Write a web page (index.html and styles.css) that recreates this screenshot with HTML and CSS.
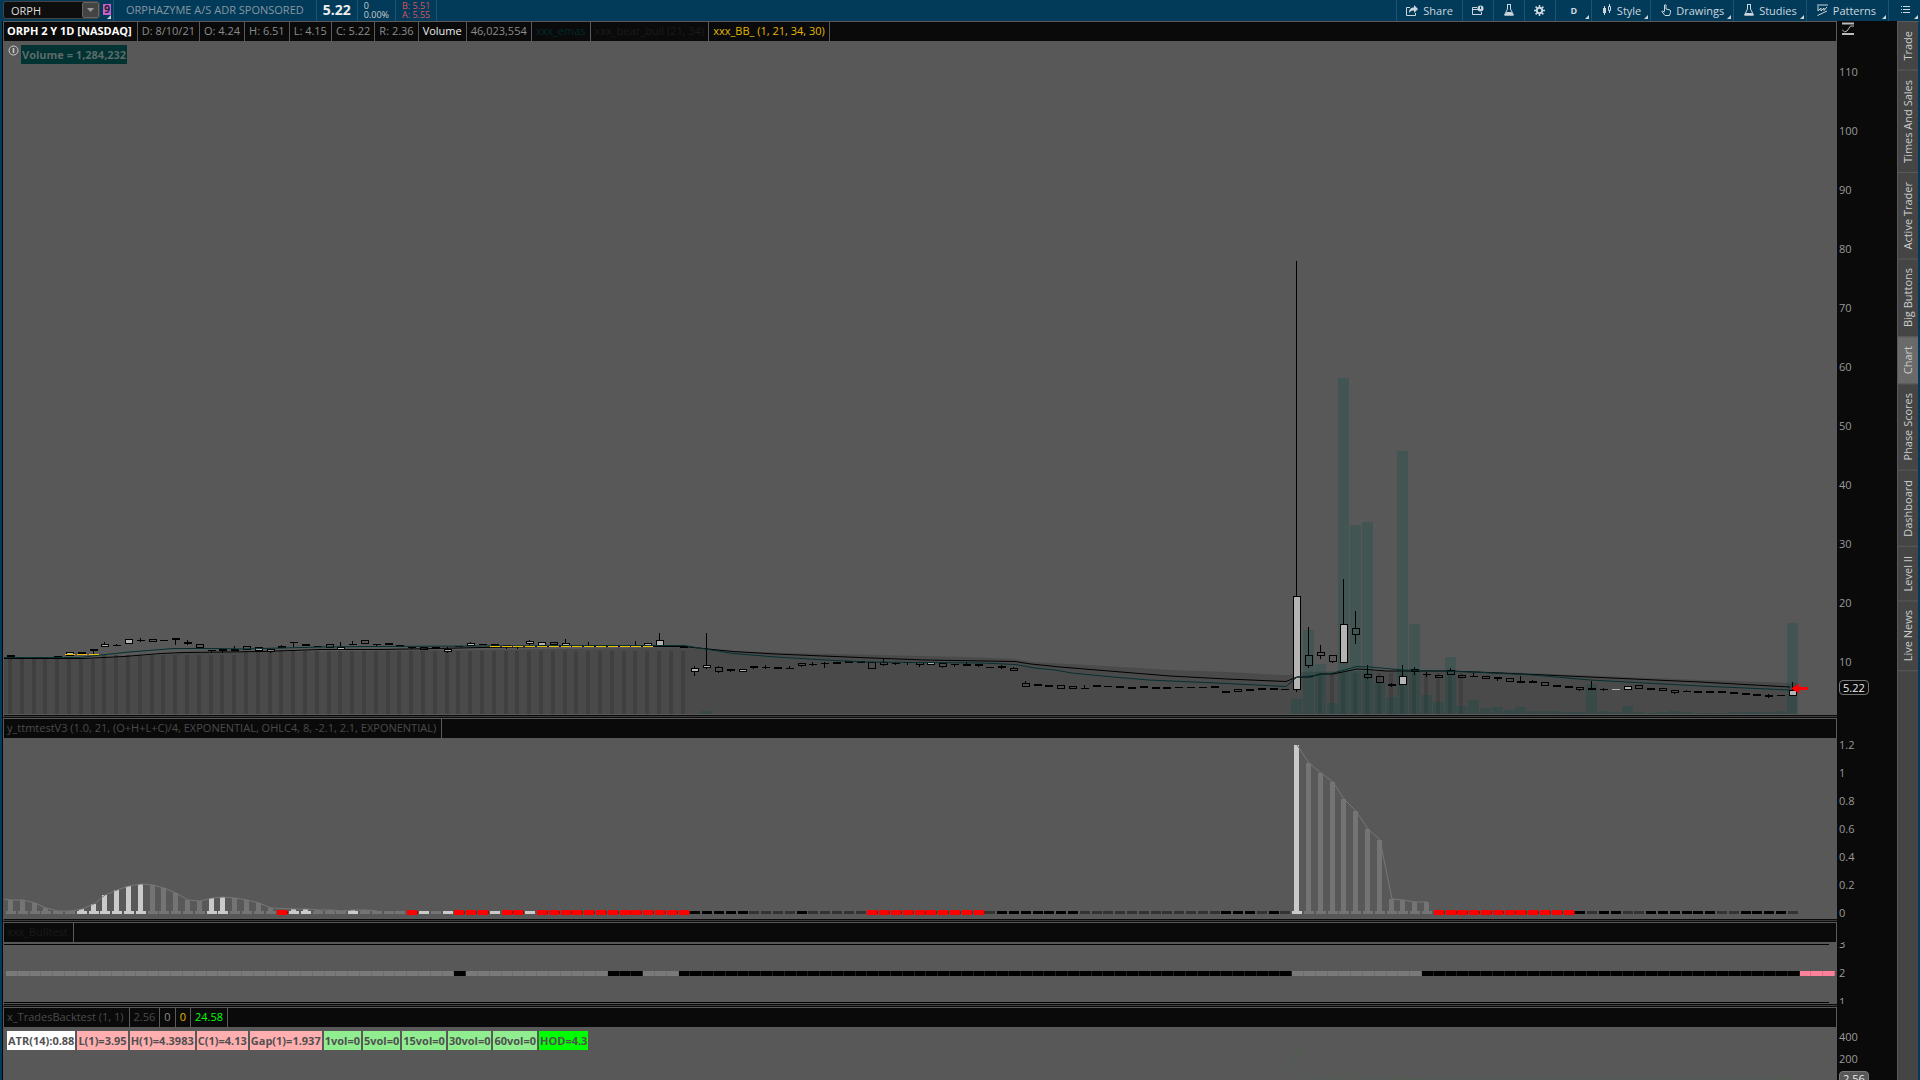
FILE: index.html
```
<!DOCTYPE html>
<html lang="en">
<head>
    <meta charset="UTF-8">
    <meta name="viewport" content="width=device-width, initial-scale=1.0">
    <title>ORPH - Chart</title>
    <link rel="stylesheet" href="styles.css">
</head>
<body>
    <header class="toolbar">
        <div class="symbol-box">
            <input type="text" class="symbol" aria-label="Symbol" value="ORPH">
            <button class="symbol-drop" aria-label="Symbol list"><svg width="8" height="4" viewBox="0 0 8 4"><path d="M0 0h7L3.500 4z" fill="#999"/></svg></button>
        </div>
        <button class="link-color more" aria-label="Link color 9"><span>9</span></button>
        <span class="company">ORPHAZYME A/S ADR SPONSORED</span>
        <span class="last">5.22</span>
        <span class="pair">0<br>0.00%</span>
        <span class="pair quote">B: 5.51<br>A: 5.55</span>
        <nav class="tools">
            <button class="tool share"><svg width="12" height="11" viewBox="0 0 12 11"><path d="M4 2.500H.5v8h9V8" fill="none" stroke="#ccd6dd"/><path d="M3 8c0-4 2-5.500 5-5.500V0l4 4-4 4V5.500C6 5.500 4.500 6 3 8z" fill="#ccd6dd"/></svg>Share</button>
            <button class="tool" aria-label="Detach"><svg width="12" height="11" viewBox="0 0 12 11"><path d="M5 2.500H.5v7h9V7M.5 4.500H6" fill="none" stroke="#ccd6dd"/><circle cx="8.500" cy="3.500" r="3" fill="#ccd6dd"/><path d="M8.500 1.500v2.500" stroke="#023a5a"/></svg></button>
            <button class="tool" aria-label="Lab"><svg width="10" height="12" viewBox="0 0 10 12"><path d="M3 .5h4M3.500 1v4L.5 11h9L6.500 5V1" fill="none" stroke="#ccd6dd"/><path d="M2.500 8h5l2 3.500h-9z" fill="#ccd6dd"/></svg></button>
            <button class="tool" aria-label="Settings"><svg width="11" height="11" viewBox="0 0 11 11"><circle cx="5.500" cy="5.500" r="2.700" fill="none" stroke="#ccd6dd" stroke-width="2"/><path d="M5.500 0v2M5.500 9v2M0 5.500h2M9 5.500h2M1.600 1.600l1.400 1.400M8 8l1.400 1.400M9.400 1.600L8 3M3 8L1.600 9.400" stroke="#ccd6dd" stroke-width="1.500"/></svg></button>
            <button class="tool period more">D</button>
            <button class="tool more"><svg width="10" height="12" viewBox="0 0 10 12"><path d="M2.500 2v9M7.500 0v9" stroke="#ccd6dd"/><path d="M1 4h3v5H1z" fill="#ccd6dd"/><path d="M6.500 2.500h2v4h-2z" fill="#023a5a" stroke="#ccd6dd"/></svg>Style</button>
            <button class="tool more"><svg width="10" height="12" viewBox="0 0 10 12"><path d="M3.500 7.500V1q.8-1 1.500 0v4l4 1q.8.500.5 2.500l-1 3H4L.8 7.500q.8-1 2.700.5" fill="none" stroke="#ccd6dd"/></svg>Drawings</button>
            <button class="tool more"><svg width="10" height="12" viewBox="0 0 10 12"><path d="M3 .5h4M3.500 1v4L.5 11h9L6.500 5V1" fill="none" stroke="#ccd6dd"/><path d="M1.500 9h7l1 2.500h-9z" fill="#ccd6dd"/></svg>Studies</button>
            <button class="tool patterns more"><svg width="11" height="12" viewBox="0 0 11 12"><path d="M0 1h11M1 2v5l3-3v3l3-3v2.500L10 3M.5 11.500L10 7" fill="none" stroke="#ccd6dd"/></svg>Patterns</button>
            <button class="tool more menu" aria-label="Menu"><svg width="9" height="8" viewBox="0 0 9 8"><path d="M0 .5h1M0 3.500h1M0 6.500h1M2 .5h7M2 3.500h7M2 6.500h7" stroke="#ccd6dd"/></svg></button>
        </nav>
    </header>

    <div class="workspace">
        <main class="charts">
            <section class="panel price">
                <div class="plot-side">
                    <div class="legend">
                        <span class="name">ORPH 2 Y 1D [NASDAQ]</span>
                        <span>D: 8/10/21</span>
                        <span>O: 4.24</span>
                        <span>H: 6.51</span>
                        <span>L: 4.15</span>
                        <span>C: 5.22</span>
                        <span>R: 2.36</span>
                        <span class="white">Volume</span>
                        <span>46,023,554</span>
                        <span class="emas">xxx_emas</span>
                        <span class="faint">xxx_bear_bull (21, 34)</span>
                        <span class="gold">xxx_BB_ (1, 21, 34, 30)</span>
                    </div>
                    <div class="plot">
                        <svg id="priceChart" viewBox="4 41 1833 674" preserveAspectRatio="none"></svg>
                        <div class="labels">
                            <svg class="info" width="11" height="12" viewBox="0 0 11 12"><circle cx="5.500" cy="5.500" r="4.500" fill="none" stroke="#ccc"/><path d="M5.500 3v5" stroke="#ccc" stroke-width="1.500"/></svg>
                            <span class="volume-label">Volume = 1,284,232</span>
                        </div>
                    </div>
                </div>
                <div class="axis">
                    <svg class="fit" width="12" height="14" viewBox="0 0 12 14"><path d="M0 1.500h12M0 12h12" stroke="#bbb" stroke-width="2"/><path d="M0 7.500l2.500 2.500 2.500-1 3.500-5H12" fill="none" stroke="#bbb"/></svg>
                    <span>110</span><span>100</span><span>90</span><span>80</span><span>70</span><span>60</span><span>50</span><span>40</span><span>30</span><span>20</span><span>10</span>
                    <b class="tag">5.22</b>
                </div>
            </section>

            <section class="panel squeeze">
                <div class="plot-side">
                    <div class="legend">
                        <span class="dim">y_ttmtestV3 (1.0, 21, (O+H+L+C)/4, EXPONENTIAL, OHLC4, 8, -2.1, 2.1, EXPONENTIAL)</span>
                    </div>
                    <div class="plot"><svg id="squeezeChart" viewBox="4 738 1833 181" preserveAspectRatio="none"></svg></div>
                </div>
                <div class="axis">
                    <span>1.2</span><span>1</span><span>0.8</span><span>0.6</span><span>0.4</span><span>0.2</span><span>0</span>
                </div>
            </section>

            <section class="panel trend">
                <div class="plot-side">
                    <div class="legend">
                        <span class="faint">xxx_Bulltest</span>
                    </div>
                    <div class="plot"><svg id="trendChart" viewBox="4 942 1833 62" preserveAspectRatio="none"></svg></div>
                </div>
                <div class="axis">
                    <span>3</span><span>2</span><span>1</span>
                </div>
            </section>

            <section class="panel trades">
                <div class="plot-side">
                    <div class="legend">
                        <span class="dim">x_TradesBacktest (1, 1)</span>
                        <span class="dim">2.56</span>
                        <span>0</span>
                        <span class="gold">0</span>
                        <span class="lime">24.58</span>
                    </div>
                    <div class="plot">
                        <svg id="tradesChart" viewBox="4 1027 1833 53" preserveAspectRatio="none"></svg>
                        <div class="stats">
                            <span>ATR(14):0.88</span>
                            <span class="pink">L(1)=3.95</span>
                            <span class="pink">H(1)=4.3983</span>
                            <span class="pink">C(1)=4.13</span>
                            <span class="pink">Gap(1)=1.937</span>
                            <span class="green">1vol=0</span>
                            <span class="green">5vol=0</span>
                            <span class="green">15vol=0</span>
                            <span class="green">30vol=0</span>
                            <span class="green">60vol=0</span>
                            <span class="hod">HOD=4.3</span>
                        </div>
                    </div>
                </div>
                <div class="axis">
                    <span>400</span><span>200</span>
                    <b class="tag">2.56</b>
                </div>
            </section>
        </main>

        <nav class="side-tabs">
            <button>Trade</button>
            <button>Times And Sales</button>
            <button>Active Trader</button>
            <button>Big Buttons</button>
            <button class="active">Chart</button>
            <button>Phase Scores</button>
            <button>Dashboard</button>
            <button>Level II</button>
            <button>Live News</button>
        </nav>
    </div>

    <script src="script.js"></script>
</body>
</html>
```
FILE: styles.css
```
* {
    box-sizing: border-box;
}

body {
    margin: 0;
    height: 100vh;
    display: flex;
    flex-direction: column;
    overflow: hidden;
    background-color: #023a5a;
    color: #999;
    font-family: "Open Sans", "Noto Sans", sans-serif;
    font-size: 11px;
}

button, input {
    font: inherit;
    color: inherit;
    background: none;
    border: none;
    padding: 0;
    margin: 0;
}

/* Top toolbar */
.toolbar {
    display: flex;
    height: 21px;
    flex: none;
    padding-left: 3px;
    white-space: nowrap;
}

.symbol-box {
    display: flex;
    width: 97px;
    height: 18px;
    margin-top: 1px;
    background-color: #0e0e0e;
    border: 1px solid #444;
    border-radius: 3px;
}

.symbol {
    flex: 1;
    min-width: 0;
    padding-left: 7px;
    color: #ddd;
}

.symbol-drop {
    display: flex;
    align-items: center;
    justify-content: center;
    width: 17px;
    background-color: #444;
    border: 1px solid #666;
    border-radius: 2px;
}

.link-color {
    width: 13px;
    padding-left: 3px;
    display: flex;
}

.link-color span {
    width: 8px;
    height: 11px;
    margin-top: 4px;
    background-color: #c65fd0;
    color: #222;
    font-size: 10px;
    line-height: 11px;
    font-weight: bold;
    text-align: center;
}

.company, .last, .pair {
    border-left: 1px solid #1c5272;
    line-height: 20px;
    padding: 0 6px;
}

.company {
    padding: 0 12px;
    color: #8796a0;
}

.last {
    color: #eee;
    font-size: 14px;
    font-weight: bold;
}

.pair {
    color: #ccc;
    font-size: 9px;
    line-height: 9px;
    padding-top: 1px;
}

.quote {
    color: #d9525c;
    border-right: 1px solid #1c5272;
}

.tools {
    display: flex;
    margin-left: auto;
}

.tool {
    display: flex;
    align-items: center;
    justify-content: center;
    gap: 5px;
    min-width: 31px;
    padding: 0 9px 1px;
    border-left: 1px solid #1c5272;
    color: #ccd6dd;
}

.more {
    position: relative;
}

/* small corner triangle on buttons that open a menu */
.more::after {
    content: "";
    position: absolute;
    right: 2px;
    bottom: 2px;
    border: 2px solid #ccd6dd;
    border-top-color: transparent;
    border-left-color: transparent;
}

.tool.more {
    padding-left: 10px;
}

.tool.period {
    width: 36px;
    font-size: 9px;
    font-weight: bold;
}

.tool.patterns {
    padding-right: 12px;
}

.tool.menu {
    width: 32px;
}

/* Chart area */
.workspace {
    display: flex;
    flex: 1;
    min-height: 0;
}

.charts {
    flex: 1;
    min-width: 0;
    display: flex;
    flex-direction: column;
    padding-left: 1px;
    background-color: #0a0a0a;
    border-left: 2px solid #023a5a;
}

.panel {
    display: flex;
    min-height: 0;
}

.price {
    flex: 697 1 0;
}

.squeeze {
    flex: 204 1 0;
}

.trend {
    flex: 85 1 0;
}

.trades {
    flex: 73 1 0;
}

.plot-side {
    flex: 1;
    min-width: 0;
    display: flex;
    flex-direction: column;
    background-color: #3c3c3c;
    border-left: 1px solid #585858;
    border-bottom: 3px double #0a0a0a;
}

.trades .plot-side {
    border-bottom: none;
}

.legend {
    display: flex;
    height: 20px;
    flex: none;
    background-color: #0a0a0a;
    border-top: 1px solid #5a5a5a;
    border-right: 1px solid #5a5a5a;
    line-height: 18px;
    white-space: nowrap;
    color: #8c8c8c;
}

.legend span {
    padding: 0 4px;
    border-right: 1px solid #5a5a5a;
}

.legend span:first-child {
    padding: 0 5px 0 3px;
}

.legend .name {
    color: #fff;
    font-weight: bold;
}

.legend .white {
    color: #eee;
}

.legend .emas {
    color: #002b2b;
}

.legend .faint {
    color: #1a1a1a;
}

.legend .gold {
    color: #e6b800;
}

.legend .dim {
    color: #4a4a4a;
}

.legend .lime {
    color: #00ff00;
}

.plot {
    position: relative;
    flex: 1;
    min-height: 0;
    background-color: #585858;
}

.plot > svg {
    position: absolute;
    width: 100%;
    height: 100%;
}

.labels {
    position: relative;
    display: flex;
    gap: 2px;
    padding: 4px;
}

.volume-label {
    background-color: #003331;
    color: #5c6a6a;
    font-weight: bold;
    line-height: 19px;
    padding: 0 1px;
}

.stats {
    position: relative;
    display: flex;
    gap: 2px;
    padding: 4px 3px;
    white-space: nowrap;
}

.stats span {
    padding: 0 1px;
    background-color: #fff;
    color: #505050;
    font-weight: bold;
    line-height: 19px;
}

.stats .pink {
    background-color: #ffafaf;
}

.stats .green {
    background-color: #90ee90;
}

.stats .hod {
    background-color: #00ff00;
}

/* Value axes */
.axis {
    position: relative;
    flex: none;
    width: 60px;
    display: flex;
    flex-direction: column;
    justify-content: space-between;
    padding-left: 2px;
    line-height: 16px;
}

.price .axis {
    padding-top: 43px;
    padding-bottom: 48px;
}

.squeeze .axis {
    padding-top: 19px;
    padding-bottom: 1px;
}

.trend .axis {
    margin: 20px 0 3px;
    overflow: hidden;
}

.trend .axis span:first-child {
    margin-top: -6px;
}

.trend .axis span:last-child {
    margin-bottom: -6px;
}

.trades .axis {
    justify-content: flex-start;
    gap: 6px;
    padding-top: 22px;
}

.fit {
    position: absolute;
    left: 5px;
    top: 1px;
}

.tag {
    position: absolute;
    left: 2px;
    bottom: 23px;
    padding: 0 3px;
    border: 1px solid #777;
    border-radius: 4px;
    background-color: #0a0a0a;
    color: #eee;
    font-weight: normal;
    line-height: 13px;
}

.trades .tag {
    bottom: -6px;
    background-color: #585858;
}

/* Right hand gadget tabs */
.side-tabs {
    flex: none;
    width: 23px;
    display: flex;
    flex-direction: column;
    background-color: #454545;
    border: 1px solid #5a5a5a;
    border-right: 2px solid #023a5a;
    border-bottom: none;
}

.side-tabs button {
    writing-mode: vertical-rl;
    transform: rotate(180deg);
    width: 100%;
    padding: 9px 0;
    border-top: 1px solid #5a5a5a;
    color: #ccc;
    line-height: 18px;
}

.side-tabs .active {
    background-color: #6a6a6a;
}
```
FILE: script.js
```
const NS = 'http://www.w3.org/2000/svg';
const STEP = 11.8;
const FIRST = 10.4;

const priceChart = document.getElementById('priceChart');
const squeezeChart = document.getElementById('squeezeChart');
const trendChart = document.getElementById('trendChart');
const tradesChart = document.getElementById('tradesChart');

function barX(i) {
    return Math.floor(FIRST + STEP * i);
}

function add(svg, tag, attrs) {
    const el = document.createElementNS(NS, tag);
    for (const key in attrs) {
        el.setAttribute(key, attrs[key]);
    }
    svg.appendChild(el);
    return el;
}

function rect(svg, x, y, width, height, fill) {
    return add(svg, 'rect', { x, y, width, height, fill, 'shape-rendering': 'crispEdges' });
}

function line(svg, points, stroke) {
    return add(svg, 'polyline', { points, stroke, fill: 'none' });
}

// Shaded area below the averages
add(priceChart, 'polygon', {
    points: '3,659 83,659 124,657 184,653 262,652 460,650 640,648 686,647 733,651 786,653 835,654 966,657 1015,659 1031,662 1088,665 1170,670 1227,672 1280,675 1290,675 1297,672 1370,671 1500,672 1577,675 1700,680 1797,683 1797,714 3,714',
    fill: '#4a4a4a'
});

for (let i = 0; i < 58; i++) {
    rect(priceChart, barX(i) - 2, i < 8 ? 659 : i < 20 ? 655 : 651, 4, i < 8 ? 55 : i < 20 ? 59 : 63, '#404040');
}
for (let i = 111; i < 124; i++) {
    rect(priceChart, barX(i) - 2, 673, 4, 41, '#404040');
}

// Volume: [bar, top]
const volumes = [
    [59, 711], [109, 699], [110, 630], [111, 664], [112, 703], [113, 378], [114, 525], [115, 522], [116, 683],
    [117, 697], [118, 451], [119, 624], [120, 695], [121, 702], [122, 657], [123, 706], [124, 700],
    [125, 708], [126, 707], [127, 710], [128, 707], [129, 711], [130, 711], [131, 711], [132, 712],
    [133, 712], [134, 684], [135, 711], [136, 712], [137, 706], [138, 712], [139, 713], [140, 712],
    [141, 711], [142, 712], [143, 713], [144, 713], [145, 713], [146, 712], [147, 712], [148, 712],
    [149, 712], [150, 711], [151, 623]
];
for (const [i, top] of volumes) {
    rect(priceChart, barX(i) - 5, top, 11, 714 - top, '#004d40').setAttribute('opacity', 0.25);
}

// Candles: [bar, kind, body top, body bottom, high, low]
// kind: b = black, l = light, h = hollow, w = white
const candles = [
    [0, 'b', 655, 657], [4, 'b', 656, 657], [5, 'w', 652, 655], [6, 'b', 652, 654], [7, 'b', 649, 651, 649, 654],
    [8, 'w', 644, 646, 642, 646], [9, 'b', 645, 646, 644, 646], [10, 'w', 639, 643], [11, 'b', 640, 641, 638, 642],
    [12, 'h', 639, 641], [13, 'b', 640, 641], [14, 'b', 638, 640, 638, 645], [15, 'b', 642, 644, 640, 645],
    [16, 'h', 644, 647], [17, 'b', 650, 651, 650, 653], [18, 'b', 649, 651, 649, 653], [19, 'b', 649, 651, 646, 651],
    [20, 'h', 646, 649], [21, 'w', 647, 650], [22, 'w', 649, 651, 649, 653], [23, 'b', 646, 648, 645, 648],
    [24, 'b', 642, 643, 642, 647], [25, 'b', 644, 646], [26, 'b', 646, 647], [27, 'h', 644, 647],
    [28, 'w', 647, 649, 642, 649], [29, 'b', 644, 645, 641, 645], [30, 'h', 640, 643], [31, 'b', 644, 645, 644, 647],
    [32, 'b', 643, 645], [33, 'b', 645, 647], [34, 'b', 647, 648, 647, 649], [35, 'w', 647, 649],
    [36, 'b', 647, 648], [37, 'w', 649, 651, 647, 653], [38, 'b', 646, 647], [39, 'w', 643, 645, 642, 646],
    [40, 'b', 644, 645], [41, 'b', 644, 646], [42, 'b', 645, 647, 645, 649], [43, 'b', 646, 647, 646, 649],
    [44, 'w', 641, 643, 640, 645], [45, 'w', 642, 645], [46, 'h', 642, 644], [47, 'w', 643, 645, 639, 645],
    [48, 'b', 646, 647], [49, 'b', 646, 647, 642, 647], [50, 'b', 646, 647], [51, 'b', 646, 647],
    [52, 'b', 646, 647], [53, 'b', 646, 647, 641, 647], [54, 'w', 643, 645], [55, 'w', 640, 645, 633, 645],
    [56, 'b', 646, 647], [57, 'w', 646, 647], [58, 'w', 668, 671, 666, 676], [59, 'w', 665, 667, 633, 669],
    [60, 'h', 667, 671, 666, 673], [61, 'b', 669, 671, 669, 672], [62, 'w', 669, 671], [63, 'b', 666, 668, 666, 669],
    [64, 'b', 667, 668, 665, 669], [65, 'b', 667, 669], [66, 'b', 668, 669, 666, 669], [67, 'h', 663, 665, 663, 667],
    [68, 'b', 664, 665, 662, 666], [69, 'b', 663, 664, 662, 668], [70, 'b', 662, 664], [71, 'b', 661, 663],
    [72, 'w', 661, 662], [73, 'h', 662, 668], [74, 'h', 662, 664, 659, 666], [75, 'b', 663, 664, 662, 665],
    [76, 'b', 662, 663, 662, 665], [77, 'h', 662, 664, 662, 667], [78, 'w', 662, 664], [79, 'h', 663, 666, 662, 668],
    [80, 'b', 664, 665, 664, 667], [81, 'b', 664, 666, 662, 666], [82, 'b', 664, 666, 664, 667], [83, 'b', 667, 668],
    [84, 'b', 666, 668, 665, 669], [85, 'h', 668, 670, 667, 671], [86, 'h', 683, 686, 681, 687], [87, 'b', 684, 686],
    [88, 'b', 685, 687], [89, 'h', 685, 688], [90, 'h', 686, 688], [91, 'b', 688, 689, 685, 689],
    [92, 'b', 685, 687], [93, 'b', 686, 687], [94, 'b', 686, 688], [95, 'b', 687, 689], [96, 'b', 686, 688],
    [97, 'b', 687, 689], [98, 'b', 687, 689], [99, 'b', 687, 688], [100, 'b', 687, 688], [101, 'b', 687, 688],
    [102, 'b', 686, 688], [103, 'b', 691, 693], [104, 'h', 689, 691], [105, 'b', 689, 691], [106, 'b', 688, 690],
    [107, 'b', 688, 690], [108, 'b', 689, 690], [109, 'w', 596, 689, 261, 692], [110, 'h', 655, 665, 627, 668],
    [111, 'h', 652, 655, 645, 659], [112, 'h', 655, 661, 655, 663], [113, 'w', 624, 662, 579, 662], [114, 'h', 628, 634, 611, 644],
    [115, 'h', 674, 677, 665, 679], [116, 'h', 676, 682, 676, 683], [117, 'b', 684, 686, 683, 687], [118, 'w', 676, 684, 665, 684],
    [119, 'b', 669, 672, 667, 675], [120, 'b', 674, 675, 672, 677], [121, 'h', 675, 677], [122, 'h', 670, 674, 668, 675],
    [123, 'h', 675, 677], [124, 'b', 676, 677, 673, 677], [125, 'h', 676, 678], [126, 'b', 677, 679, 677, 681],
    [127, 'h', 678, 681], [128, 'b', 681, 683, 676, 683], [129, 'b', 681, 683, 680, 683], [130, 'h', 682, 685],
    [131, 'b', 685, 687], [132, 'b', 686, 688], [133, 'h', 687, 689, 687, 691], [134, 'b', 688, 690, 681, 690],
    [135, 'b', 689, 690, 688, 691], [136, 'l', 689, 690], [137, 'w', 686, 689], [138, 'h', 685, 688],
    [139, 'b', 688, 690], [140, 'h', 688, 690], [141, 'h', 690, 692, 690, 694], [142, 'b', 691, 692, 690, 692],
    [143, 'b', 691, 693], [144, 'b', 691, 693], [145, 'b', 691, 693], [146, 'b', 692, 694], [147, 'b', 693, 695],
    [148, 'b', 694, 696], [149, 'b', 695, 697, 694, 698], [150, 'b', 695, 696], [151, 'w', 690, 695, 682, 695]
];
const bodyFill = { b: '#000', l: '#b4b4b4', h: 'none', w: '#b4b4b4' };
for (const [i, kind, top, bottom, high, low] of candles) {
    const x = barX(i);
    if (high && high < top) {
        rect(priceChart, x, high, 1, top - high, '#000');
    }
    if (low && low > bottom) {
        rect(priceChart, x, bottom, 1, low - bottom, '#000');
    }
    if (kind === 'b' || kind === 'l') {
        rect(priceChart, x - 3, top, 8, bottom - top, bodyFill[kind]);
    } else {
        add(priceChart, 'rect', {
            x: x - 2.5, y: top + 0.5, width: 7, height: bottom - top,
            fill: bodyFill[kind], stroke: '#000'
        });
    }
}

// Exponential averages
line(priceChart, '3,658.500 83,658.500 124,656.500 161,653.500 184,652.500 262,651.500 321,649.500 381,649.500 436,648.500 482,647.500 551,646.500 684,646.500 733,651.500 776,654 823,656 872,658 925,660 1015,661.500 1031,664 1060,667 1109,671 1170,676 1227,679 1286,681.500 1297,677 1310,677 1320,674 1333,674 1357,669 1367,669.500 1387,671 1450,671 1500,673 1567,676 1700,682 1790,687', '#000');
line(priceChart, '3,657.500 80,657.500 92,656 129,652 174,648.500 216,648.500 243,649 321,647 367,646.500 597,645.500 684,645.500 733,653.500 776,657 835,660.500 868,662 982,663 1015,664.500 1035,668 1055,670 1072,673 1113,677 1149,680 1227,683.500 1286,686.500 1297,677 1310,676 1333,673 1357,666.500 1370,667 1403,670 1473,672 1533,675 1590,680 1700,686 1790,690', '#062f2f');

for (let i = 5; i < 55; i++) {
    if (i < 8 || i > 40) {
        rect(priceChart, barX(i) - 4, i < 8 ? 654 : 646, 10, 1, '#f0c000');
    }
}

// Last trade marker
add(priceChart, 'path', { d: 'M1791 688.500l8-5v3.500h9v3h-9v3.500z', fill: '#f00' });

// Squeeze histogram: [bar, top, bright]
const histogram = [
    [0, 900], [1, 900], [2, 903], [3, 908], [4, 911], [5, 911], [6, 909, 1], [7, 904, 1], [8, 895, 1], [9, 890, 1],
    [10, 886, 1], [11, 884, 1], [12, 885], [13, 888], [14, 893], [15, 900], [16, 901], [17, 898, 1], [18, 897, 1],
    [19, 898], [20, 900], [21, 903], [22, 908], [24, 909, 1], [25, 909, 1], [26, 910], [27, 910], [28, 911], [29, 910, 1],
    [30, 910], [31, 911], [109, 745, 1], [110, 763], [111, 773], [112, 782], [113, 799], [114, 811], [115, 829],
    [116, 840], [117, 899], [118, 900], [119, 902], [120, 902]
];
for (const [i, top, bright] of histogram) {
    rect(squeezeChart, barX(i) - 2, top, 5, 914 - top, bright ? '#cacaca' : '#747474');
}
const outline = histogram.map(([i, top]) => `${barX(i) + 1},${top}`);
line(squeezeChart, '3,899 ' + outline.slice(0, 31).join(' '), '#777');
line(squeezeChart, outline.slice(31).join(' '), '#777');

// Momentum dots: g = gray, w = bright, r = squeeze, k = black, d = dark
const dots = 'g'.repeat(6) + 'w'.repeat(6) + 'ggggg' + 'ww' + 'gggg' + 'rwwggg' + 'wgggg' + 'rwgw' + 'rrrwrrw' +
    'r'.repeat(13) + 'kkkkkddddkddddd' + 'r'.repeat(10) + 'd' + 'k'.repeat(7) + 'd'.repeat(12) +
    'kkkdkdw' + 'g'.repeat(11) + 'r'.repeat(12) + 'kdkkddkkkkkkddkkkkd';
const dotFill = { g: '#747474', w: '#cacaca', r: '#f00', k: '#000', d: '#333' };
for (let i = 0; i < dots.length; i++) {
    if (dots[i] === 'r') {
        rect(squeezeChart, barX(i) - 4, 911, 11, 3, '#a00');
        rect(squeezeChart, barX(i) - 4, 910, 10, 5, '#f00');
    } else {
        rect(squeezeChart, barX(i) - 4, 911, 10, 3, dotFill[dots[i]]);
    }
}

// Trend band
const trend = 'g'.repeat(38) + 'k' + 'g'.repeat(12) + 'kkkggg' + 'k'.repeat(52) + 'g'.repeat(11) + 'k'.repeat(32) + 'ppp';
const trendFill = { g: '#7a7a7a', k: '#000', p: '#ff8099' };
const trendEdge = { g: '#6e6e6e', k: '#1e1e1e', p: '#d9708a' };
for (let i = 0; i < trend.length; i++) {
    const x = barX(i) - 4;
    rect(trendChart, x, 971, barX(i + 1) - 4 - x, 5, trendFill[trend[i]]);
    rect(trendChart, barX(i + 1) - 5, 971, 1, 5, trendEdge[trend[i]]);
}
rect(trendChart, 3, 944, 1826, 1, '#000');
rect(trendChart, 3, 1002, 1826, 1, '#000');

const trades = line(tradesChart, '1286,1080 1297,1048 1308,1080 1336,1080 1345,1074 1355,1080 1395,1080 1402,1078 1414,1080 1780,1080 1788,1078 1796,1080', '#456b45');
trades.setAttribute('stroke-dasharray', '2 2');
```
